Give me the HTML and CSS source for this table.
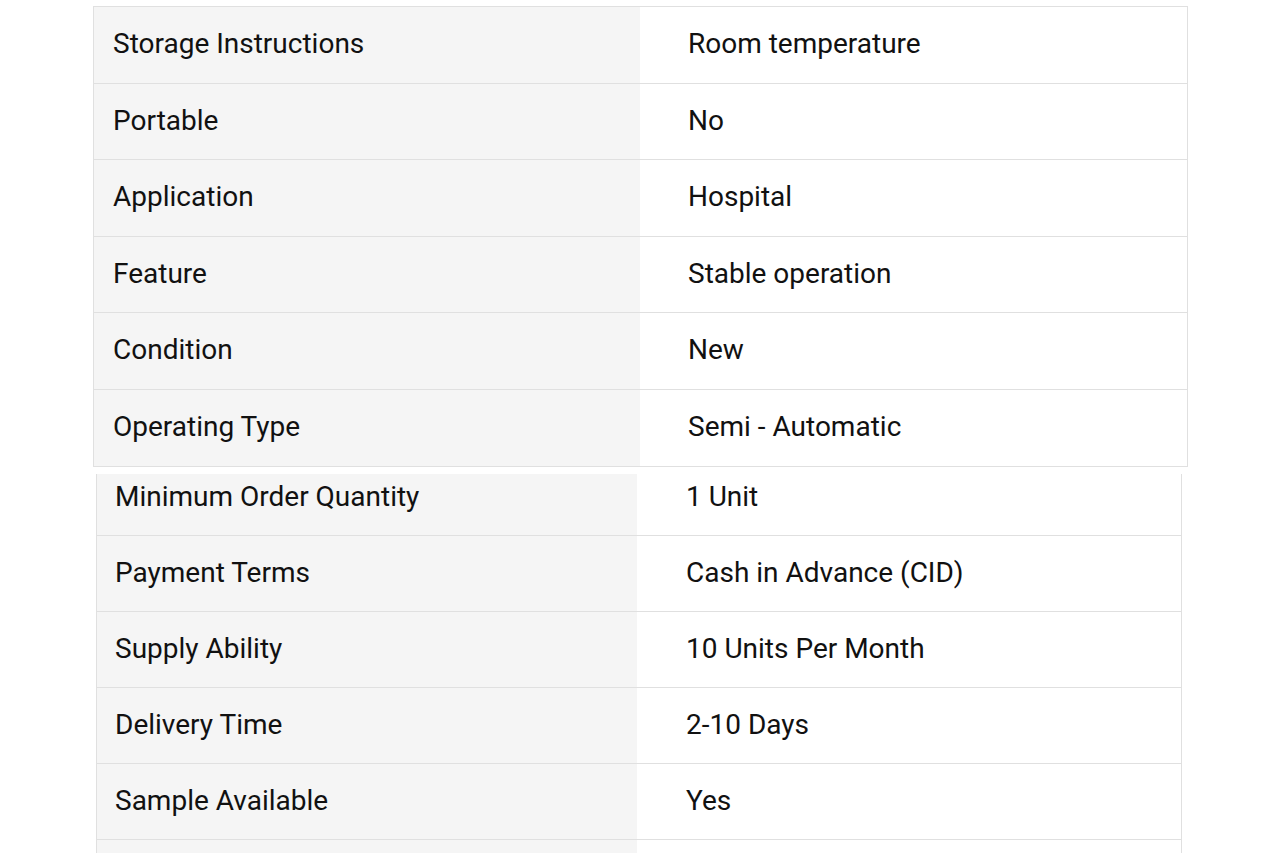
FILE: index.html
```html
<!DOCTYPE html>
<html lang="en">
<head>
<meta charset="utf-8">
<title>Specifications</title>
<link rel="stylesheet" href="styles.css">
</head>
<body>
<div class="spec spec-a">
  <div class="row"><div class="label">Storage Instructions</div><div class="value">Room temperature</div></div>
  <div class="row"><div class="label">Portable</div><div class="value">No</div></div>
  <div class="row"><div class="label">Application</div><div class="value">Hospital</div></div>
  <div class="row"><div class="label">Feature</div><div class="value">Stable operation</div></div>
  <div class="row"><div class="label">Condition</div><div class="value">New</div></div>
  <div class="row"><div class="label">Operating Type</div><div class="value">Semi - Automatic</div></div>
</div>
<div class="clip">
  <div class="spec spec-b">
    <div class="row"><div class="label">Minimum Order Quantity</div><div class="value">1 Unit</div></div>
    <div class="row"><div class="label">Payment Terms</div><div class="value">Cash in Advance (CID)</div></div>
    <div class="row"><div class="label">Supply Ability</div><div class="value">10 Units Per Month</div></div>
    <div class="row"><div class="label">Delivery Time</div><div class="value">2-10 Days</div></div>
    <div class="row"><div class="label">Sample Available</div><div class="value">Yes</div></div>
    <div class="row"><div class="label">&nbsp;</div><div class="value">&nbsp;</div></div>
  </div>
</div>
</body>
</html>
```
FILE: styles.css
```css
html, body {
  margin: 0;
  padding: 0;
  background: #ffffff;
}
body {
  font-family: Roboto, "Liberation Sans", Arial, sans-serif;
  font-size: 28px;
  line-height: 1.2;
  color: #111111;
  height: 853px;
  overflow: hidden;
}
.spec {
  display: flex;
  flex-direction: column;
  border: 1px solid #e0e0e0;
  box-sizing: border-box;
}
.row {
  display: flex;
  border-bottom: 1px solid #e0e0e0;
  box-sizing: border-box;
}
.label, .value {
  display: flex;
  align-items: center;
  padding-bottom: 1px;
  box-sizing: border-box;
}
.label {
  background: #f5f5f5;
}
.value {
  flex: 1;
  background: #ffffff;
}
.spec-a {
  margin: 6px 0 0 93px;
  width: 1095px;
}
.spec-a .row {
  height: 76.5px;
}
.spec-a .row:last-child {
  border-bottom: none;
}
.spec-a .label {
  width: 546px;
  padding-left: 19px;
}
.spec-a .value {
  padding-left: 48px;
}
.clip {
  margin-top: 7px;
  overflow: hidden;
  height: 400px;
}
.spec-b {
  margin: -15px 0 0 96px;
  width: 1086px;
  border-bottom: none;
}
.spec-b .row {
  height: 76px;
}
.spec-b .label {
  width: 540px;
  padding-left: 18px;
}
.spec-b .value {
  padding-left: 49px;
}
```
